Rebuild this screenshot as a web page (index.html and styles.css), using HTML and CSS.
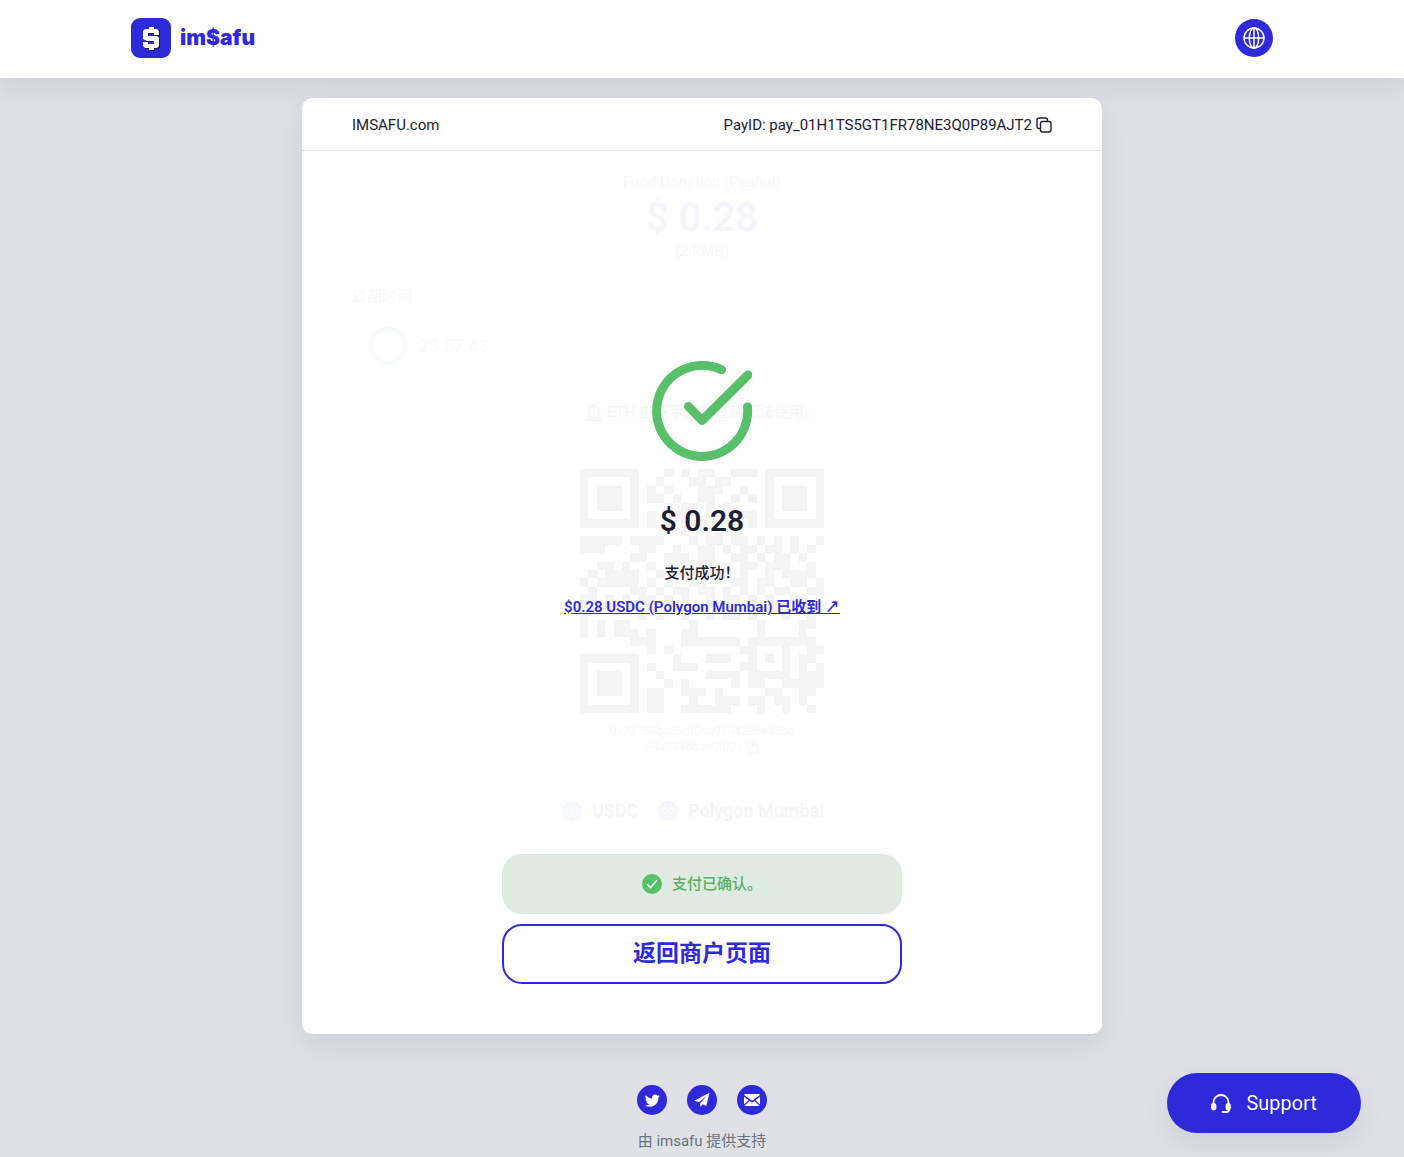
FILE: index.html
```html
<!DOCTYPE html>
<html lang="zh-CN">
<head>
<meta charset="utf-8">
<meta name="viewport" content="width=device-width, initial-scale=1">
<title>imsafu</title>
<link rel="stylesheet" href="styles.css">
</head>
<body>
<header class="site-header">
  <div class="header-inner">
    <a class="brand" href="#">
      <svg class="brand-mark" viewBox="0 0 40 40" aria-hidden="true">
        <rect width="40" height="40" rx="9" fill="#2f2ad9"/>
        <path transform="translate(1 1)" fill="#17144f" d="M18 9h5v2h5v6h-5v-2h-6v3h9l2 2v8l-2 2h-3v2h-5v-2h-4l-2-2v-4h5v2h6v-3h-7l-4-2v-8l2-2h4z"/>
        <path fill="#fff" d="M18 9h5v2h3l2 2v4h-5v-2h-6v3h9l2 2v8l-2 2h-3v2h-5v-2h-4l-2-2v-4h5v2h6v-3h-7l-4-2v-8l2-2h4z"/>
      </svg>
      <span class="brand-name">im$afu</span>
    </a>
    <button class="lang-button" type="button" aria-label="语言">
      <svg viewBox="0 0 24 24" width="24" height="24" fill="none" stroke="#fff" stroke-width="1.5" aria-hidden="true">
        <circle cx="12" cy="12" r="10"/><ellipse cx="12" cy="12" rx="4.7" ry="10"/><path d="M2 12h20M12 2v20"/>
      </svg>
    </button>
  </div>
</header>

<main class="card">
  <div class="card-head">
    <span>IMSAFU.com</span>
    <span class="pay-id">PayID: pay_01H1TS5GT1FR78NE3Q0P89AJT2
      <button class="copy-button" type="button" aria-label="复制">
        <svg viewBox="0 0 16 16" width="16" height="16" fill="none" stroke="#1d2033" stroke-width="1.4" stroke-linejoin="round" aria-hidden="true"><rect x="4.5" y="4.5" width="10.5" height="10.5" rx="2"/><path d="M4.5 11.5H3a2 2 0 0 1-2-2V3a2 2 0 0 1 2-2h6.5a2 2 0 0 1 2 2v1.5"/></svg>
      </button>
    </span>
  </div>

  <div class="card-body">
    <section class="order" aria-hidden="true">
      <p class="order-title">Food Donation (Peanut)</p>
      <p class="order-amount">$ 0.28</p>
      <p class="order-local">(2 RMB)</p>
      <p class="expiry-label">过期时间</p>
      <div class="expiry-box">
        <span class="expiry-ring"></span>
        <span class="expiry-time">23:57:43</span>
      </div>
      <p class="notice">
        <svg viewBox="0 0 18 18" width="18" height="18" fill="none" stroke="#1d2033" stroke-width="1.6"><path d="M2 14.5h14M4 14V8a5 5 0 0 1 10 0v6M1 17h16M9 1v2M9 7v3M9 11.500v1"/></svg>
        ETH 由于手续费过高无法使用。
      </p>
      <div class="qr-box">
        <svg id="qr" class="qr" viewBox="0 0 29 29" shape-rendering="crispEdges"><path id="qr-path"/></svg>
        <p class="address">0x23758ba85df0da97042b6e48ba<br>34a884dbae0f02a
          <svg class="address-copy" viewBox="0 0 16 16" width="13" height="13" fill="none" stroke="#1d2033" stroke-width="1.4"><rect x="4.5" y="4.5" width="10.5" height="10.5" rx="2"/><path d="M4.5 11.5H3a2 2 0 0 1-2-2V3a2 2 0 0 1 2-2h6.5a2 2 0 0 1 2 2v1.5"/></svg>
        </p>
      </div>
      <div class="coins">
        <span class="coin"><svg viewBox="0 0 20 20" width="20" height="20"><circle cx="10" cy="10" r="10" fill="#2775ca"/><path d="M8 4a6.500 6.500 0 0 0 0 12M12 4a6.500 6.500 0 0 1 0 12M12 8q-2-2-3.500-.5T10 10q3 1 1.500 2.500T8 12M10 5.500v9" fill="none" stroke="#fff"/></svg>USDC</span>
        <span class="coin"><svg viewBox="0 0 20 20" width="20" height="20"><circle cx="10" cy="10" r="10" fill="#6f41d8"/><path d="M9 8.500 6.500 7 4 8.500v3L6.500 13 9 11.500l2-3L13.500 7 16 8.500v3L13.500 13 11 11.500" fill="none" stroke="#fff" stroke-width="1.3"/></svg>Polygon Mumbai</span>
      </div>
    </section>

    <section class="result">
      <svg class="result-icon" viewBox="0 0 100 100" fill="none" stroke="#57c069" stroke-width="9" stroke-linecap="round" stroke-linejoin="round" aria-hidden="true">
        <path d="M69.500 8.700A45.500 45.500 0 1 0 95.500 46M36.500 45.500 50 59.500 96 14"/>
      </svg>
      <h1 class="result-amount">$ 0.28</h1>
      <p class="result-text">支付成功！</p>
      <a class="result-link" href="#">$0.28 USDC (Polygon Mumbai) 已收到 ↗</a>
    </section>
  </div>

  <div class="actions">
    <div class="confirmed" role="status">
      <svg viewBox="0 0 20 20" width="20" height="20" fill="none" aria-hidden="true"><circle cx="10" cy="10" r="10" fill="#57c069"/><path d="m5.500 10.500 3 3.200 6-7" stroke="#fff" stroke-width="1.5" stroke-linecap="round" stroke-linejoin="round"/></svg>
      支付已确认。
    </div>
    <button class="return-button" type="button">返回商户页面</button>
  </div>
</main>

<footer class="site-footer">
  <nav class="social">
    <a href="#" aria-label="Twitter"><svg viewBox="0 0 24 24" width="15" height="15" fill="#fff"><path d="M23.600 4.900a9.600 9.600 0 0 1-2.800.8 4.900 4.900 0 0 0 2.200-2.700 9.900 9.900 0 0 1-3.100 1.200 4.900 4.900 0 0 0-8.400 4.500A13.900 13.900 0 0 1 1.400 3.500a4.900 4.900 0 0 0 1.500 6.600 4.900 4.900 0 0 1-2.200-.6 4.900 4.900 0 0 0 3.900 4.900 4.900 4.900 0 0 1-2.200.1 4.900 4.900 0 0 0 4.600 3.400A9.900 9.900 0 0 1 0 19.900a13.900 13.900 0 0 0 7.500 2.200c9.100 0 14-7.500 14-14v-.6a10 10 0 0 0 2.100-2.600z"/></svg></a>
    <a href="#" aria-label="Telegram"><svg viewBox="0 0 16 16" width="16" height="16" fill="#fff"><path d="M15.500.7.500 8.600l4.100 1.600L12.600 4l-6.300 7v4l2.300-2.800 3.700 1.700z"/></svg></a>
    <a href="#" aria-label="Email"><svg viewBox="0 0 16 12" width="16" height="12" fill="#fff"><path d="M.5 0h15v1.300L8 6.800.5 1.300zM0 2.700l4.600 3.600L0 10.600zM16 2.700v7.900l-4.600-4.300zM5.600 7 8 8.700 10.400 7l5.200 5H.4z"/></svg></a>
  </nav>
  <p class="powered">由 imsafu 提供支持</p>
</footer>

<button class="support" type="button">
  <svg viewBox="0 0 20 20" width="20" height="20" fill="none" stroke="#fff" stroke-width="1.8" stroke-linecap="round" aria-hidden="true"><path d="M2.500 12V9.500a7.500 7.500 0 0 1 15 0V12M18 15.500v1a2.500 2.500 0 0 1-2.500 2.500H11.500"/><rect x="1" y="11" width="3.500" height="5.500" rx="1.700" fill="#fff"/><rect x="15.500" y="11" width="3.500" height="5.500" rx="1.700" fill="#fff"/></svg>
  Support
</button>
<script src="qr.js"></script>
</body>
</html>
```

FILE: qr.js
```js
// One string per module row; 1 is a dark module.
const rows = [
  "11111110001010110011101111111",
  "10000010010001101100001000001",
  "10111010101000111001001011101",
  "10111010110100110010101011101",
  "10111010001011010100001011101",
  "10000010100110010101101000001",
  "11111110101010101010101111111",
  "00000000000010001010000000000",
  "11111011110001011011010101001",
  "11100001100100110101101101010",
  "00000011001110110011010110100",
  "00110100101011100101101110010",
  "01011110010110101101001011110",
  "10111110101001100011011001101",
  "01000011010110110101010110011",
  "11010101101010010110101001100",
  "00110010100101101001011010110",
  "10000001010010010110100010010",
  "10101100000001000000010000110",
  "10101110100011000000010000100",
  "00000011100011111110111111110",
  "00000000101000000001100010011",
  "11111110000100011100101010110",
  "10000010100111000001100010101",
  "10111010010000011110111110111",
  "10111010001010000010110011111",
  "10111010110011101000001100110",
  "10000010110001001110110110100",
  "11111110110011111100010010010"
];

let d = "";
rows.forEach((row, y) => {
  for (const run of row.matchAll(/1+/g)) {
    d += `M${run.index} ${y}h${run[0].length}v1h-${run[0].length}z`;
  }
});
document.getElementById("qr-path").setAttribute("d", d);
```

FILE: styles.css
```css
* { box-sizing: border-box; }

body {
  margin: 0;
  min-height: 100vh;
  background: #dfe1e6;
  color: #1d2033;
  font-family: Roboto, "Noto Sans CJK SC", sans-serif;
  font-size: 15px;
  line-height: 20px;
}

p, h1 { margin: 0; }
svg { display: block; flex: none; }
button { font: inherit; cursor: pointer; }

.site-header {
  padding-bottom: 2px;
  background: #fff;
  box-shadow: 0 10px 30px rgba(0, 0, 0, .08);
}

.header-inner {
  display: flex;
  align-items: center;
  justify-content: space-between;
  max-width: 1182px;
  height: 76px;
  margin: 0 auto;
  padding: 0 20px;
}

.brand {
  display: flex;
  align-items: center;
  gap: 9px;
  color: #2f2ad9;
  text-decoration: none;
}

.brand-mark { width: 40px; height: 40px; }

.brand-name {
  font-family: Inter, sans-serif;
  font-size: 21px;
  font-weight: 900;
}

.lang-button {
  display: grid;
  place-items: center;
  width: 38px;
  height: 38px;
  padding: 0;
  border: 0;
  border-radius: 50%;
  background: #2f2ad9;
}

.card {
  max-width: 800px;
  margin: 20px auto 0;
  border-radius: 10px;
  background: #fff;
  box-shadow: 0 10px 30px rgba(0, 0, 0, .08);
}

.card-head {
  display: flex;
  align-items: center;
  justify-content: space-between;
  height: 53px;
  padding: 2px 50px 0;
  border-bottom: 1px solid #dfe1e6;
}

.pay-id {
  display: flex;
  align-items: center;
  gap: 4px;
}

.copy-button {
  padding: 0;
  border: 0;
  background: none;
}

/* The finished order stays faintly visible under the result. */
.card-body { display: grid; }

.order, .result {
  grid-area: 1 / 1;
  display: flex;
  flex-direction: column;
  align-items: center;
}

.order {
  padding: 20px 50px 33px;
  opacity: .04;
}

.order-title { line-height: 22px; }

.order-amount {
  color: #2f2ad9;
  font-size: 40px;
  font-weight: 600;
  line-height: 50px;
}

.order-local { line-height: 16px; }

.order-title, .order-local, .expiry-label, .address { opacity: .7; }

.expiry-label {
  align-self: flex-start;
  margin-top: 27px;
}

.expiry-box {
  display: flex;
  align-self: stretch;
  align-items: center;
  gap: 12px;
  height: 60px;
  margin-top: 10px;
  padding: 0 16px;
  border: 1px solid #dfe1e6;
  border-radius: 20px;
}

.expiry-ring {
  width: 38px;
  height: 38px;
  border: 4px solid #57c069;
  border-radius: 50%;
}

.expiry-time {
  color: #57c069;
  font-size: 18px;
}

.notice {
  display: flex;
  align-items: center;
  gap: 4px;
  height: 36px;
  margin-top: 18px;
  padding: 0 10px;
  border-radius: 10px;
  background: #eceef2;
}

.qr-box {
  width: 280px;
  margin-top: 20px;
  padding: 18px 17px;
  border: 1px solid #dfe1e6;
  border-radius: 20px;
}

.qr {
  width: 100%;
  fill: #000;
}

.address {
  margin-top: 10px;
  font-size: 12px;
  line-height: 16px;
  text-align: center;
}

.address-copy {
  display: inline-block;
  vertical-align: middle;
}

.coins {
  display: flex;
  gap: 20px;
  width: 280px;
  margin-top: 27px;
  font-size: 18px;
  font-weight: 500;
}

.coin {
  display: flex;
  align-items: center;
  gap: 10px;
}

.result {
  z-index: 1;
  padding-top: 210px;
}

.result-icon {
  width: 100px;
  height: 100px;
  overflow: hidden;
}

.result-amount {
  margin-top: 40px;
  font-size: 30px;
  font-weight: 600;
  line-height: 40px;
}

.result-text {
  margin-top: 22px;
  font-weight: 500;
}

.result-link {
  margin-top: 14px;
  color: #2f2ad9;
  font-weight: 600;
}

.actions {
  display: flex;
  flex-direction: column;
  gap: 10px;
  max-width: 400px;
  margin: 0 auto;
  padding-bottom: 50px;
}

.confirmed {
  display: flex;
  align-items: center;
  justify-content: center;
  gap: 10px;
  height: 60px;
  border-radius: 20px;
  background: #dfebe2;
  color: #57b267;
  font-weight: 500;
}

.return-button {
  height: 60px;
  border: 2px solid #2f2ad9;
  border-radius: 20px;
  background: #fff;
  color: #2f2ad9;
  font-size: 23px;
  font-weight: 700;
}

.site-footer {
  display: flex;
  flex-direction: column;
  align-items: center;
  gap: 16px;
  padding-top: 51px;
}

.social {
  display: flex;
  gap: 20px;
}

.social a {
  display: grid;
  place-items: center;
  width: 30px;
  height: 30px;
  border-radius: 50%;
  background: #2f2ad9;
}

.powered { color: #6b7280; }

.support {
  position: fixed;
  right: 43px;
  bottom: 24px;
  display: flex;
  align-items: center;
  gap: 15px;
  height: 60px;
  padding: 0 44px;
  border: 0;
  border-radius: 30px;
  background: #2f2ad9;
  box-shadow: 0 10px 30px rgba(0, 0, 0, .08);
  color: #fff;
  font-size: 20px;
}
```
